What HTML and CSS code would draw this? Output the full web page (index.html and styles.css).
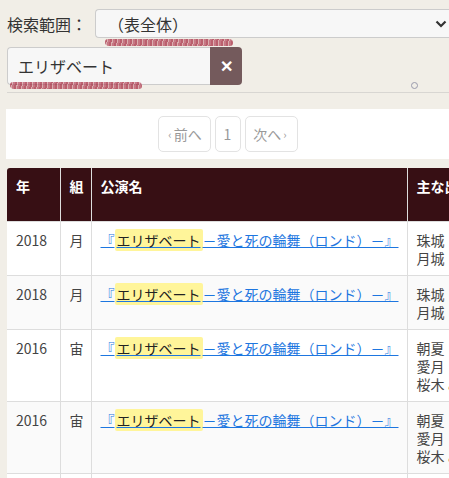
FILE: index.html
```html
<!DOCTYPE html>
<html lang="ja">
<head>
  <meta charset="UTF-8" />
  <meta name="viewport" content="width=device-width, initial-scale=1.0"/>
  <title>公演検索</title>
  <link rel="stylesheet" href="styles.css">
</head>
<body>

  <!-- SEARCH FORM -->
  <div class="search">
    <div class="search-row">
      <label class="search-label">検索範囲：</label>
      <div class="select">
        <span>（表全体）</span>
        <svg class="chevron" width="12" height="8" viewBox="0 0 12 8">
          <path d="M1.5 1.5 L6 6 L10.5 1.5" fill="none" stroke="#333" stroke-width="2.2"/>
        </svg>
      </div>
    </div>
    <div class="search-row">
      <div class="input">エリザベート</div>
      <button class="clear-btn">✕</button>
      <span class="spinner"></span>
    </div>
    <span class="scribble scribble-select"></span>
    <span class="scribble scribble-input"></span>
  </div>

  <hr class="divider">

  <!-- PAGER -->
  <div class="pager">
    <span class="page-btn"><small>‹</small>前へ</span>
    <span class="page-btn num">1</span>
    <span class="page-btn">次へ<small>›</small></span>
  </div>

  <!-- RESULTS -->
  <div class="table-wrap">
    <table class="grid">
      <colgroup>
        <col class="c-year">
        <col class="c-troupe">
        <col class="c-title">
        <col class="c-cast">
      </colgroup>
      <thead>
        <tr>
          <th class="first">年</th>
          <th>組</th>
          <th>公演名</th>
          <th>主な出演者</th>
        </tr>
      </thead>
      <tbody id="rows"></tbody>
    </table>
  </div>

  <script>
    const shows = [
      { year: 2018, troupe: '月', cast: ['珠城　りょう', '月城　かなと'] },
      { year: 2018, troupe: '月', cast: ['珠城　りょう', '月城　かなと'] },
      { year: 2016, troupe: '宙', cast: ['朝夏　まなと', '愛月　ひかる', '桜木 みなと'] },
      { year: 2016, troupe: '宙', cast: ['朝夏　まなと', '愛月　ひかる', '桜木 みなと'] },
      { year: 2014, troupe: '花', cast: ['明日海　りお', '蘭乃　はな'] },
    ];

    const rows = document.getElementById('rows');
    shows.forEach(s => {
      const tr = document.createElement('tr');
      tr.innerHTML = `
        <td>${s.year}</td>
        <td class="center">${s.troupe}</td>
        <td><a href="#">『<mark>エリザベート</mark>－愛と死の輪舞（ロンド）－』</a></td>
        <td class="cast">${s.cast.join('<br>')}</td>
      `;
      rows.appendChild(tr);
    });
  </script>

</body>
</html>
```

FILE: styles.css
```css
* {
  box-sizing: border-box;
  margin: 0;
  padding: 0;
}

body {
  font-family: "Noto Sans CJK JP", "Noto Sans", sans-serif;
  background: #f1eee7;
  color: #333;
  padding: 9px 0 0 7px;
  overflow: hidden;
}

/* search form */
.search {
  position: relative;
}

.search-row {
  display: flex;
  align-items: center;
}

.search-row + .search-row {
  margin-top: 9px;
}

.search-label {
  font-size: 16px;
  color: #333;
  width: 88px;
}

.select {
  flex: 1;
  height: 29px;
  display: flex;
  align-items: center;
  justify-content: space-between;
  padding: 0 2px 0 12px;
  background: #f7f7f7;
  border: 1px solid #ccc;
  border-right: none;
  border-radius: 4px 0 0 4px;
  font-size: 16px;
  color: #333;
}

.input {
  width: 203px;
  height: 38px;
  display: flex;
  align-items: center;
  padding-left: 10px;
  background: #f7f7f7;
  border: 1px solid #ccc;
  border-right: none;
  border-radius: 4px 0 0 4px;
  font-size: 16px;
  color: #333;
}

.clear-btn {
  width: 32px;
  height: 38px;
  border: none;
  background: #745a5c;
  color: #fff;
  font-size: 16px;
  font-weight: bold;
  border-radius: 0 4px 4px 0;
}

.spinner {
  width: 7px;
  height: 7px;
  border: 1.3px solid #9a9aac;
  border-radius: 50%;
  margin-left: auto;
  margin-right: 31px;
  align-self: flex-end;
  margin-bottom: -4px;
}

.scribble {
  position: absolute;
  height: 7px;
  border-radius: 3px 4px 3px 4px;
  background: repeating-linear-gradient(100deg,
    rgba(165, 40, 62, 0.8) 0 2px,
    rgba(200, 120, 130, 0.6) 2px 3px,
    rgba(178, 62, 84, 0.75) 3px 5px);
  opacity: 0.9;
}

.scribble-select {
  left: 98px;
  top: 30px;
  width: 128px;
}

.scribble-input {
  left: 3px;
  top: 73px;
  width: 132px;
}

.divider {
  border: none;
  border-top: 1px solid #d8d6d2;
  margin: 7px 0 16px;
}

/* pager */
.pager {
  margin-left: -1px;
  background: #fff;
  padding: 7px 0;
  display: flex;
  justify-content: center;
  gap: 4px;
}

.page-btn {
  height: 36px;
  width: 53px;
  display: flex;
  align-items: center;
  justify-content: center;
  border: 1px solid #e3e3e3;
  border-radius: 5px;
  font-size: 14px;
  color: #999;
}

.page-btn small {
  font-size: 11px;
  margin: 0 2px;
}

.page-btn.num {
  width: 26px;
}

/* results table */
.table-wrap {
  margin-top: 9px;
  overflow: hidden;
}

.grid {
  border-collapse: collapse;
  table-layout: fixed;
  width: 560px;
  font-size: 14px;
  line-height: 18px;
}

.c-year { width: 53px; }
.c-troupe { width: 31px; }
.c-title { width: 316px; }
.c-cast { width: 160px; }

.grid th {
  background: #370f14;
  color: #fff;
  font-weight: bold;
  text-align: left;
  vertical-align: top;
  height: 53px;
  padding: 9px 9px 7px;
  border-left: 1px solid #ddd;
}

.grid th.first {
  border-left: none;
  border-top-left-radius: 3px;
}

.grid td {
  vertical-align: top;
  padding: 9px 9px 8px;
  border: 1px solid #ddd;
  color: #444;
  background: #fff;
}

.grid tr td:first-child {
  border-left: none;
}

.grid tbody tr:nth-child(even) td {
  background: #fafafa;
}

.grid td.center {
  text-align: center;
}

.grid td.cast {
  white-space: nowrap;
}

.grid a {
  color: #1d76e0;
  text-decoration: underline;
  white-space: nowrap;
}

.grid mark {
  background: #fff59a;
  color: #222;
  border-radius: 2px;
  padding: 1px 2px;
}
```
